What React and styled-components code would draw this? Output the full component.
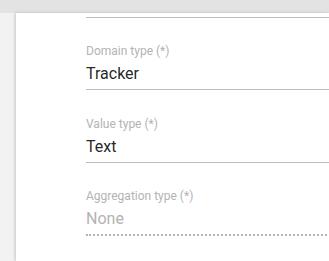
import React from 'react';
import styled, { createGlobalStyle } from 'styled-components';

const GlobalStyle = createGlobalStyle`
  html, body {
    margin: 0;
    padding: 0;
    background: #f2f2f2;
    font-family: Roboto, "Liberation Sans", sans-serif;
  }
`;

const Page = styled.div`
  width: 329px;
  height: 261px;
  overflow: hidden;
  display: flex;
  flex-direction: column;
  background: #f2f2f2;
`;

const TopBar = styled.div`
  height: 13px;
  flex-shrink: 0;
  background: #e3e3e3;
`;

const Body = styled.div`
  flex: 1;
  display: flex;
`;

const Gutter = styled.div`
  width: 16px;
  flex-shrink: 0;
  background: #f2f2f2;
`;

const Panel = styled.div`
  flex: 1;
  background: #fff;
  box-shadow: -1px 0 3px rgba(0, 0, 0, 0.18);
  padding-left: 70px;
  overflow: hidden;
`;

const Field = styled.div`
  height: ${(p) => p.$height || 73}px;
  box-sizing: border-box;
  display: flex;
  flex-direction: column;
  justify-content: flex-end;
  padding-bottom: 3px;
  border-bottom: ${(p) => (p.$disabled ? '2px dotted #b3b3b3' : '1px solid #bdbdbd')};
  width: 300px;
`;

const Label = styled.div`
  font-size: 12px;
  line-height: 16px;
  color: #b3b3b3;
  margin-bottom: 3px;
`;

const Value = styled.div`
  font-size: 16px;
  line-height: 24px;
  color: ${(p) => (p.$disabled ? '#b3b3b3' : 'rgba(0, 0, 0, 0.87)')};
`;

const fields = [
  { label: 'Domain type (*)', value: 'Tracker' },
  { label: 'Value type (*)', value: 'Text' },
  { label: 'Aggregation type (*)', value: 'None', disabled: true },
];

export default function App() {
  return (
    <Page>
      <GlobalStyle />
      <TopBar />
      <Body>
        <Gutter />
        <Panel>
          <Field $height={5} />
          {fields.map((f, i) => (
            <Field key={f.label} $disabled={f.disabled} $height={i === 0 ? 72 : 73}>
              <Label>{f.label}</Label>
              <Value $disabled={f.disabled}>{f.value}</Value>
            </Field>
          ))}
        </Panel>
      </Body>
    </Page>
  );
}
